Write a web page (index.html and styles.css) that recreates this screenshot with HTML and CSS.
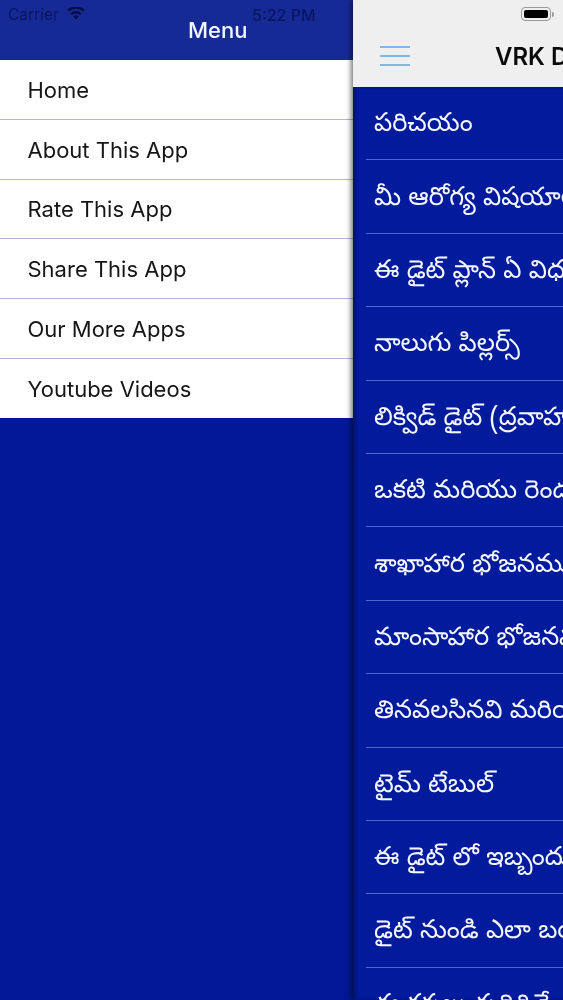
FILE: index.html
```html
<!DOCTYPE html>
<html lang="te">
<head>
<meta charset="utf-8">
<title>VRK Diet</title>
<link rel="stylesheet" href="styles.css">
</head>
<body>
<div class="app">
  <aside class="drawer">
    <header class="drawer-head">
      <div class="status-left">
        <span class="carrier">Carrier</span>
        <svg class="wifi" viewBox="0 0 18 13" aria-hidden="true"><path d="M9 12.6 6.3 9.5a4 4 0 0 1 5.4 0Z"/><path d="M4.9 8 3.3 6.2a8.6 8.6 0 0 1 11.4 0L13.1 8a6.2 6.2 0 0 0-8.2 0Z"/><path d="M1.9 4.6.2 2.8a13 13 0 0 1 17.6 0l-1.7 1.8a10.6 10.6 0 0 0-14.2 0Z"/></svg>
      </div>
      <span class="clock">5:22 PM</span>
      <h1 class="drawer-title">Menu</h1>
    </header>
    <nav class="menu">
      <a class="menu-item">Home</a>
      <a class="menu-item">About This App</a>
      <a class="menu-item">Rate This App</a>
      <a class="menu-item">Share This App</a>
      <a class="menu-item">Our More Apps</a>
      <a class="menu-item">Youtube Videos</a>
    </nav>
  </aside>
  <main class="main">
    <header class="main-head">
      <div class="battery-row">
        <span class="battery"><span class="battery-fill"></span></span><span class="battery-tip"></span>
      </div>
      <div class="nav-row">
        <svg class="burger" viewBox="0 0 30 20" aria-hidden="true"><path d="M0 1h30M0 10h30M0 19h30"/></svg>
        <span class="nav-title">VRK Diet</span>
      </div>
    </header>
    <ul class="topics">
      <li class="topic"><span class="topic-text">పరిచయం</span></li>
      <li class="topic"><span class="topic-text">మీ ఆరోగ్య విషయాలు తెలుసుకోండి</span></li>
      <li class="topic"><span class="topic-text">ఈ డైట్ ప్లాన్ ఏ విధంగా పనిచేస్తుంది</span></li>
      <li class="topic"><span class="topic-text">నాలుగు పిల్లర్స్</span></li>
      <li class="topic"><span class="topic-text">లిక్విడ్ డైట్ (ద్రవాహారం)</span></li>
      <li class="topic"><span class="topic-text">ఒకటి మరియు రెండవ భోజనం</span></li>
      <li class="topic"><span class="topic-text">శాఖాహార భోజనము</span></li>
      <li class="topic"><span class="topic-text">మాంసాహార భోజనము</span></li>
      <li class="topic"><span class="topic-text">తినవలసినవి మరియు తినకూడనివి</span></li>
      <li class="topic"><span class="topic-text">టైమ్ టేబుల్</span></li>
      <li class="topic"><span class="topic-text">ఈ డైట్ లో ఇబ్బందులు</span></li>
      <li class="topic"><span class="topic-text">డైట్ నుండి ఎలా బయటకు రావాలి</span></li>
      <li class="topic"><span class="topic-text">ఈ కర్మలు కుదిరితే</span></li>
    </ul>
  </main>
</div>
</body>
</html>
```
FILE: styles.css
```css
* { box-sizing: border-box; }
html, body { margin: 0; padding: 0; height: 100%; overflow: hidden; }
body { font-family: Inter, Roboto, "Noto Sans", "Liberation Sans", sans-serif; background: #021898; }
.app { display: flex; width: 563px; height: 1000px; overflow: hidden; filter: blur(.35px); }

.drawer { flex: 0 0 353px; height: 100%; background: #021898; }
.drawer-head { position: relative; height: 60px; background: #162a96; }
.status-left { position: absolute; left: 8px; top: 6px; display: flex; align-items: center; gap: 8px; }
.carrier { font-size: 15.5px; line-height: 17px; color: #0a1560; }
.wifi { width: 18px; height: 13px; fill: #060e48; margin-top: -2px; }
.clock { position: absolute; left: 252px; top: 6px; font-size: 16px; line-height: 18px; font-weight: 500; color: #0a1560; }
.drawer-title { position: absolute; left: 188px; top: 16px; margin: 0; font-size: 22px; line-height: 28px; font-weight: 500; color: #f4f6ff; }

.menu { display: flex; flex-direction: column; background: #fff; }
.menu-item { display: flex; align-items: center; height: 59.8px; padding-left: 27.5px; padding-top: 1px; font-size: 22px; color: #161616; border-bottom: 1px solid #b3b3dc; }
.menu-item:last-child { border-bottom: 0; height: 59px; }

.main { flex: 0 0 563px; height: 100%; background: #021a9c; box-shadow: -2px 0 5px rgba(0, 0, 0, .55); position: relative; }
.main-head { height: 87px; background: #efefef; display: flex; flex-direction: column; }
.battery-row { display: flex; align-items: center; height: 28px; padding-left: 168px; }
.battery { display: block; width: 30px; height: 14px; padding: 2px; border: 1px solid #9a9a9a; border-radius: 4px; }
.battery-fill { display: block; width: 100%; height: 100%; background: #000; border-radius: 2px; }
.battery-tip { display: block; width: 2px; height: 5px; background: #9a9a9a; border-radius: 0 2px 2px 0; margin-left: 1px; }
.nav-row { display: flex; align-items: center; height: 59px; padding-left: 27px; margin-top: -1px; }
.burger { width: 30px; height: 20px; fill: none; stroke: #5aa6e6; stroke-width: 1.4; margin-top: -1px; }
.nav-title { margin-left: 85px; font-size: 24px; font-weight: 600; color: #0a0a0a; white-space: nowrap; }

.topics { list-style: none; margin: 0; padding: 0 0 0 13px; height: 913px; background: #021a9c; box-shadow: inset 3px 0 3px rgba(0, 0, 0, .3); }
.topic { display: flex; align-items: center; height: 73.4px; padding-left: 8px; padding-top: 6px; border-bottom: 1px solid #4c68cc; }
.topic-text { font-family: "Noto Sans Telugu", "Noto Sans", Roboto, sans-serif; font-size: 25.6px; color: #f5f7ff; white-space: nowrap; }
```
